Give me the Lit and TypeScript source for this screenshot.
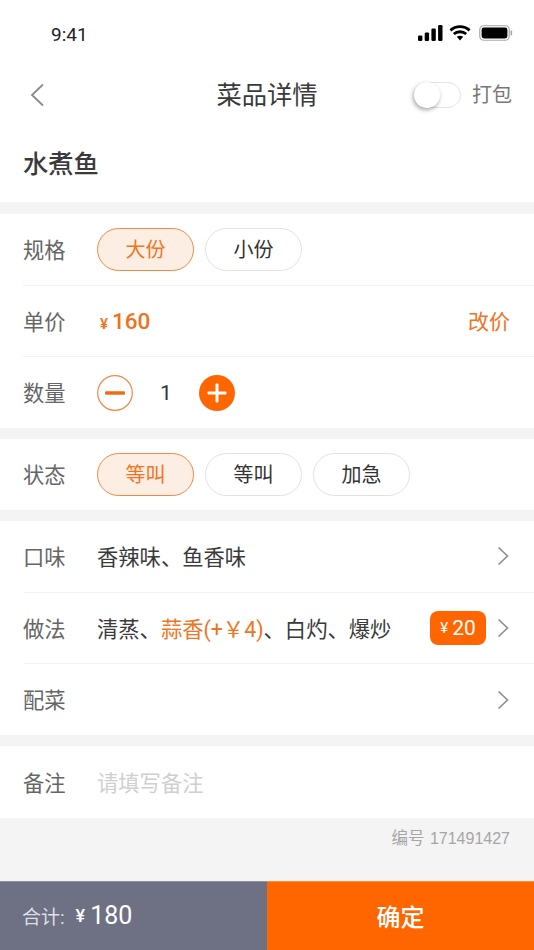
import { LitElement, html, css } from "lit";
import { customElement } from "lit/decorators.js";

const chevron = html`<svg class="chev" viewBox="0 0 12 18" width="12" height="18"><path d="M1.5 .5 L10.5 9 L1.5 17.5" fill="none" stroke="#8f8f8f" stroke-width="1.6"/></svg>`;

@customElement("app-root")
export class AppRoot extends LitElement {
  static styles = css`
    :host { display: block; width: 534px; height: 950px; overflow: hidden; background: #f4f4f4;
      font-family: Roboto, "Noto Sans CJK SC", sans-serif; color: #333; }
    .page { display: flex; flex-direction: column; height: 950px; }
    .top { background: #fff; height: 202px; flex: none; display: flex; flex-direction: column; }
    .status { height: 67px; flex: none; box-sizing: border-box; padding: 23px 21px 0 51px; display: flex; justify-content: space-between; align-items: flex-start; }
    .time { font-size: 19px; line-height: 24px; color: #222; }
    .sicons { display: flex; align-items: center; padding-top: 2px; }
    .sicons .sig { margin-right: 6px; }
    .sicons .wifi { margin-right: 8px; }
    .nav { height: 55px; flex: none; position: relative; display: flex; align-items: center; justify-content: space-between; padding: 0 22px 0 30px; }
    .navtitle { position: absolute; left: 0; right: 0; text-align: center; font-size: 25.3px; color: #3a3a3a; padding-bottom: 4px; }
    .navright { display: flex; align-items: center; gap: 11px; color: #777; font-size: 20px; position: relative; }
    .pack { padding-bottom: 2px; }
    .toggle { width: 47px; height: 26px; box-sizing: border-box; border: 1px solid #e4e4e4; border-radius: 13px; position: relative; background: #fff; }
    .knob { position: absolute; left: -1px; top: -1px; width: 26px; height: 26px; border-radius: 50%; background: #fff; box-shadow: -1px 2px 4px rgba(0,0,0,.35); }
    .name { font-size: 25.3px; font-weight: 500; padding: 25px 23px 0; line-height: 36px; color: #3a3a3a; }
    .sec { background: #fff; margin-top: 11px; flex: none; display: flex; flex-direction: column; }
    .sec.first { margin-top: 12px; }
    .h214 { height: 214px; }
    .h71 { height: 71px; }
    .h72 { height: 72px; }
    .row { flex: 1; min-height: 0; margin-left: 23px; padding-right: 24px; display: flex; align-items: center; border-bottom: 1px solid #f2f2f2; box-sizing: border-box; }
    .row:last-child { border-bottom: none; }
    .lab { width: 74px; flex: none; font-size: 21.3px; color: #666; padding-bottom: 2px; }
    .pills { display: flex; gap: 11px; }
    .pill { width: 97px; height: 43px; box-sizing: border-box; border-radius: 22px; border: 1px solid #e2e2e2; padding-bottom: 2px; display: flex; align-items: center; justify-content: center; font-size: 20px; color: #333; }
    .pill.on { background: #fdeee4; border-color: #ee8a48; color: #f07423; }
    .price { color: #f2711c; font-size: 22.5px; font-weight: 500; margin-left: 3px; display: flex; align-items: baseline; gap: 4px; }
    .price small { font-size: 15px; font-weight: 500; }
    .spacer { flex: 1; }
    .edit { color: #f07423; font-size: 21px; padding-bottom: 3px; }
    .stepper { display: flex; align-items: center; }
    .num { width: 66px; text-align: center; font-size: 21px; color: #333; }
    .val { font-size: 21.3px; color: #3a3a3a; white-space: nowrap; padding-bottom: 1px; }
    .val em { font-style: normal; color: #f07423; }
    .tag { background: #ff6600; color: #fff; border-radius: 8px; width: 56px; height: 34px; display: flex; align-items: center; justify-content: center; font-size: 21px; gap: 4px; margin-right: 11px; }
    .tag small { font-size: 15px; }
    .chev { flex: none; margin-right: 1px; }
    .ph { font-size: 21.3px; color: #cfcfcf; padding-bottom: 1px; }
    .code { flex: 1; text-align: right; padding: 9px 24px 0 0; font-family: "Liberation Sans", "Noto Sans CJK SC", sans-serif; font-size: 16px; line-height: 22px; color: #a6a6a6; }
    .code span { font-size: 16.5px; margin-right: 1px; }
    .foot { height: 69px; display: flex; flex: none; }
    .total { width: 267px; background: #6e7084; color: #fff; display: flex; align-items: center; padding-left: 22px; box-sizing: border-box; box-shadow: inset 0 1px 0 #8f91a3; }
    .total small { font-size: 19px; color: #dfdfe6; }
    .total .y { font-size: 18px; margin: 0 5px 0 11px; font-weight: 500; }
    .total b { font-weight: 400; font-size: 25px; }
    .ok { flex: 1; background: #ff6600; color: #fff; font-size: 24px; font-weight: 500; display: flex; align-items: center; justify-content: center; box-shadow: inset 0 1px 0 #ff8a3c; }
  `;

  render() {
    return html`<div class="page">
      <div class="top">
        <div class="status">
          <span class="time">9:41</span>
          <span class="sicons">
            <svg class="sig" width="25" height="16" viewBox="0 0 25 16"><rect x="0" y="10.5" width="4.4" height="5.5" rx="1.2" fill="#000"/><rect x="6.7" y="7.5" width="4.4" height="8.5" rx="1.2" fill="#000"/><rect x="13.4" y="3.5" width="4.4" height="12.5" rx="1.2" fill="#000"/><rect x="20.1" y="0" width="4.4" height="16" rx="1.2" fill="#000"/></svg>
            <svg class="wifi" width="22" height="16" viewBox="0 0 22 16"><path d="M1.4 5.4 C6.8 .4 15.2 .4 20.6 5.4 M4.8 9 C8.2 6 13.8 6 17.2 9" fill="none" stroke="#000" stroke-width="2.8"/><path d="M7.8 11.8 C9.6 10.3 12.4 10.3 14.2 11.8 L11 15.6 Z" fill="#000"/></svg>
            <svg width="34" height="16" viewBox="0 0 34 16"><rect x=".75" y=".75" width="29.5" height="14.5" rx="4" fill="none" stroke="#a8a8a8" stroke-width="1.2"/><rect x="2.6" y="2.6" width="25.8" height="10.8" rx="2.4" fill="#000"/><rect x="31.5" y="5.5" width="1.6" height="5" rx=".8" fill="#a8a8a8"/></svg>
          </span>
        </div>
        <div class="nav">
          <svg width="15" height="24" viewBox="0 0 15 24"><path d="M13 1.5 L2 12 L13 22.5" fill="none" stroke="#8a8a8a" stroke-width="1.8"/></svg>
          <span class="navtitle">菜品详情</span>
          <span class="navright"><span class="toggle"><span class="knob"></span></span><span class="pack">打包</span></span>
        </div>
        <div class="name">水煮鱼</div>
      </div>

      <div class="sec first h214">
        <div class="row"><span class="lab">规格</span><div class="pills"><span class="pill on">大份</span><span class="pill">小份</span></div></div>
        <div class="row"><span class="lab">单价</span><span class="price"><small>¥</small>160</span><span class="spacer"></span><span class="edit">改价</span></div>
        <div class="row"><span class="lab">数量</span><div class="stepper">
          <svg width="36" height="36" viewBox="0 0 36 36"><circle cx="18" cy="18" r="17.3" fill="#fff" stroke="#ee8a48" stroke-width="1.2"/><rect x="8" y="16.3" width="20" height="3.4" rx="1.2" fill="#f26a14"/></svg>
          <span class="num">1</span>
          <svg width="36" height="36" viewBox="0 0 36 36"><circle cx="18" cy="18" r="18" fill="#ff6600"/><rect x="8.5" y="16.5" width="19" height="3" rx="1" fill="#fff"/><rect x="16.5" y="8.5" width="3" height="19" rx="1" fill="#fff"/></svg>
        </div></div>
      </div>

      <div class="sec h71">
        <div class="row"><span class="lab">状态</span><div class="pills"><span class="pill on">等叫</span><span class="pill">等叫</span><span class="pill">加急</span></div></div>
      </div>

      <div class="sec h214">
        <div class="row"><span class="lab">口味</span><span class="val">香辣味、鱼香味</span><span class="spacer"></span>${chevron}</div>
        <div class="row"><span class="lab">做法</span><span class="val">清蒸、<em>蒜香(+￥4)</em>、白灼、爆炒</span><span class="spacer"></span><span class="tag"><small>¥</small>20</span>${chevron}</div>
        <div class="row"><span class="lab">配菜</span><span class="spacer"></span>${chevron}</div>
      </div>

      <div class="sec h72">
        <div class="row"><span class="lab">备注</span><span class="ph">请填写备注</span></div>
      </div>

      <div class="code"><span>编号</span> 171491427</div>
      <div class="foot">
        <div class="total"><small>合计:</small><span class="y">¥</span><b>180</b></div>
        <div class="ok">确定</div>
      </div>
    </div>`;
  }
}
